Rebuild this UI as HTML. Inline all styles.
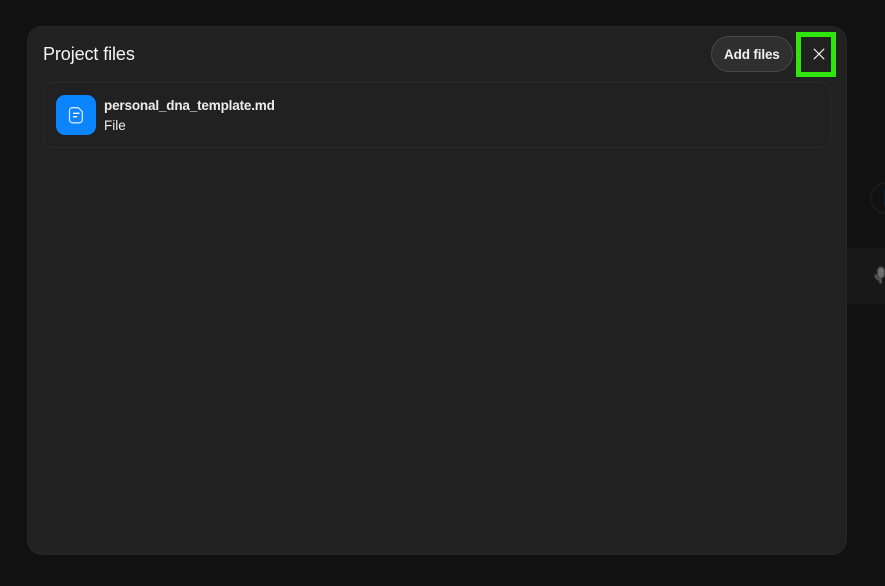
<!DOCTYPE html>
<html lang="en">
<head>
<meta charset="utf-8">
<title>Project files</title>
<style>
html,body{margin:0;padding:0;width:885px;height:586px;overflow:hidden;background:#111111;}
body{position:relative;font-family:"Liberation Sans",sans-serif;color:#f2f2f2;}
.abs{position:absolute;white-space:nowrap;}
.strip{position:absolute;left:847px;top:248px;width:38px;height:56px;background:#181818;}
.circle{position:absolute;left:870px;top:182px;width:32px;height:32px;box-sizing:border-box;border:2px solid #1b1b1b;border-radius:50%;filter:blur(.6px);}
.dot{position:absolute;left:884px;top:190px;width:1px;height:16px;background:#0f2231;}
.modal{position:absolute;left:27px;top:26px;width:820px;height:529px;box-sizing:border-box;background:#212121;border:1px solid #262626;border-radius:15px;}
.card{position:absolute;left:43px;top:82px;width:788px;height:66px;box-sizing:border-box;border:1px solid #2a2a2a;border-radius:9px;}
.tile{position:absolute;left:56px;top:95px;width:40px;height:40px;background:#0a84ff;border-radius:9px;}
.btn{position:absolute;left:711px;top:36px;width:82px;height:36px;box-sizing:border-box;background:#2f2f2f;border:1px solid #474747;border-radius:18px;}
.green{position:absolute;left:796px;top:32px;width:40px;height:45px;box-sizing:border-box;border:5px solid #2ee60b;}
</style>
</head>
<body>
<div class="circle"></div>
<div class="dot"></div>
<div class="strip"></div>
<svg class="abs" style="left:873px;top:265px;filter:blur(.8px)" width="12" height="22" viewBox="0 0 12 22">
  <rect x="4.500" y="2" width="7" height="11" rx="3.500" fill="#6f6f6f"/>
  <path d="M2.500 9.500c0 3.500 2.500 5 5 5v4" fill="none" stroke="#666" stroke-width="2"/>
</svg>
<div class="modal"></div>
<div class="abs" style="left:43px;top:44px;font-size:18px;line-height:21px;color:#f4f4f4;letter-spacing:-.1px;">Project files</div>
<div class="btn"></div>
<div class="abs" style="left:724px;top:47px;font-size:13.500px;line-height:16px;font-weight:700;color:#f0f0f0;letter-spacing:-.15px;">Add files</div>
<svg class="abs" style="left:811px;top:46px" width="16" height="16" viewBox="0 0 16 16">
  <path d="M2.800 2.800L13.200 13.200M13.200 2.800L2.800 13.200" stroke="#eeeeee" stroke-width="1.200" fill="none"/>
</svg>
<div class="green"></div>
<div class="card"></div>
<div class="tile"></div>
<svg class="abs" style="left:68px;top:106px" width="16" height="18" viewBox="0 0 16 18">
  <path d="M4.500 1.700h5.800l4 3.900v8.200a3 3 0 0 1-3 3h-6.800a3 3 0 0 1-3-3v-9.100a3 3 0 0 1 3-3z" fill="none" stroke="#cfe6ff" stroke-width="1.300"/>
  <path d="M5 7.300h6.500M5 10.700h4.200" stroke="#ffffff" stroke-width="1.300" fill="none"/>
</svg>
<div class="abs" style="left:104px;top:98px;font-size:13.500px;line-height:16px;font-weight:700;color:#ececec;letter-spacing:-.17px;">personal_dna_template.md</div>
<div class="abs" style="left:104px;top:118px;font-size:13.500px;line-height:16px;color:#ececec;">File</div>
</body>
</html>
